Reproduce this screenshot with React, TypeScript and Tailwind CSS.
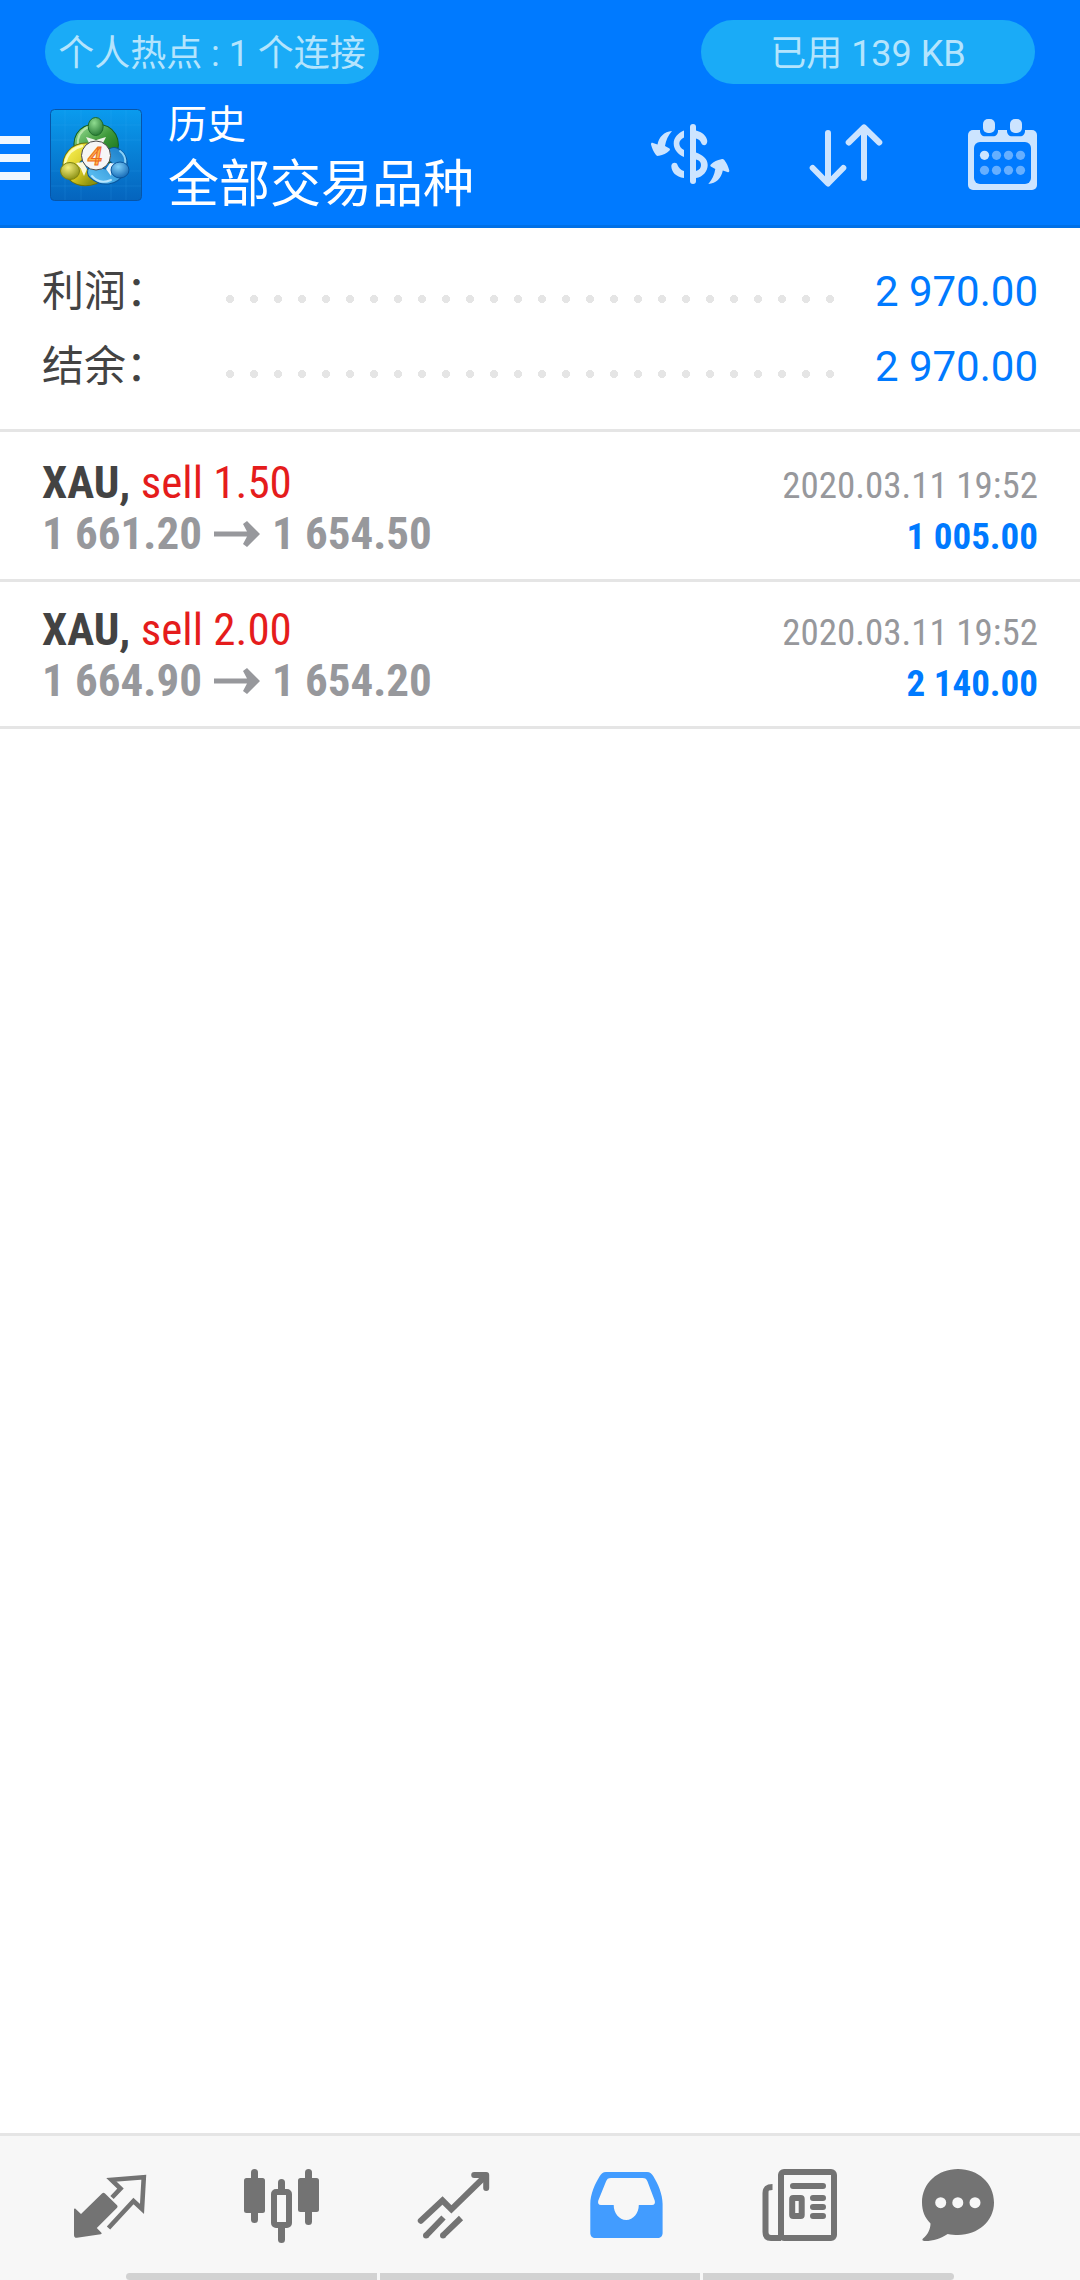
// Trade history screen: account totals, closed deals and the bottom tab bar

import type { ReactNode } from "react";

interface Deal {
  id: number;
  symbol: string;
  side: string;
  open: string;
  close: string;
  time: string;
  profit: string;
}

const totals = [
  { label: "利润：", value: "2 970.00" },
  { label: "结余：", value: "2 970.00" },
];

const deals: Deal[] = [
  {
    id: 1,
    symbol: "XAU,",
    side: "sell 1.50",
    open: "1 661.20",
    close: "1 654.50",
    time: "2020.03.11 19:52",
    profit: "1 005.00",
  },
  {
    id: 2,
    symbol: "XAU,",
    side: "sell 2.00",
    open: "1 664.90",
    close: "1 654.20",
    time: "2020.03.11 19:52",
    profit: "2 140.00",
  },
];

function AppLogo() {
  return (
    <svg viewBox="0 0 92 92" className="size-[92px] shrink-0" aria-hidden="true">
      <defs>
        <linearGradient id="tile" x1="0" y1="0" x2="0" y2="1">
          <stop offset="0" stopColor="#0a9bee" />
          <stop offset="1" stopColor="#0564bd" />
        </linearGradient>
        <linearGradient id="green" x1="0" y1="0" x2="1" y2="1">
          <stop offset="0" stopColor="#7cc878" />
          <stop offset="0.5" stopColor="#3f9a3b" />
          <stop offset="1" stopColor="#1f7a22" />
        </linearGradient>
        <linearGradient id="yellow" x1="0" y1="0" x2="1" y2="1">
          <stop offset="0" stopColor="#f2e94a" />
          <stop offset="0.6" stopColor="#d3c520" />
          <stop offset="1" stopColor="#8f9410" />
        </linearGradient>
        <linearGradient id="blue" x1="1" y1="0" x2="0" y2="1">
          <stop offset="0" stopColor="#2488d0" />
          <stop offset="1" stopColor="#55b8ee" />
        </linearGradient>
        <radialGradient id="greenHead" cx="0.4" cy="0.3" r="0.8">
          <stop offset="0" stopColor="#8fdc90" />
          <stop offset="1" stopColor="#1c6f2a" />
        </radialGradient>
        <radialGradient id="yellowHead" cx="0.4" cy="0.3" r="0.8">
          <stop offset="0" stopColor="#f4ef7c" />
          <stop offset="1" stopColor="#7f8508" />
        </radialGradient>
        <radialGradient id="blueHead" cx="0.4" cy="0.3" r="0.8">
          <stop offset="0" stopColor="#7fd0fa" />
          <stop offset="1" stopColor="#0b5fae" />
        </radialGradient>
      </defs>
      <rect x="0.5" y="0.5" width="91" height="91" rx="4" fill="url(#tile)" stroke="#0655a8" />
      <path d="M15 1V91M31 1V91M61 1V91M76 1V91M1 16H91M1 31H91M1 62H91M1 77H91" stroke="#4db8ff" strokeOpacity="0.14" />

      <g fill="none" strokeLinecap="round">
        <path d="M34 43C29 32 34 23 46 23S64 32 58 46" stroke="#145c1c" strokeWidth="17" />
        <path d="M34 43C29 32 34 23 46 23S64 32 58 46" stroke="url(#green)" strokeWidth="15" />
        <path d="M28 36C27 27 32 21 38 18" stroke="#b5e4a8" strokeWidth="2" />
        <path d="M36 42C26 42 20 50 21 58C24 68 33 71 44 67" stroke="#6d7208" strokeWidth="17" />
        <path d="M36 42C26 42 20 50 21 58C24 68 33 71 44 67" stroke="url(#yellow)" strokeWidth="15" />
        <path d="M32 37C23 39 17 45 15 54" stroke="#fdfbb0" strokeWidth="2.5" />
        <path d="M64 46C70 49 71 55 68 60C63 69 53 70 45 63" stroke="#0a559c" strokeWidth="16" />
        <path d="M64 46C70 49 71 55 68 60C63 69 53 70 45 63" stroke="url(#blue)" strokeWidth="14" />
        <path d="M42 67C47 73 54 74 61 71" stroke="#b8e6fd" strokeWidth="2" />
        <path d="M70 42C74 45 76 50 75 55" stroke="#8ad2f8" strokeWidth="2" />
      </g>
      <path d="M36 28L46 31L56 28L52 36H40Z" fill="#eef5ea" />
      <path d="M26 54L33 53L37 60L34 67L31 60Z" fill="#fbf9dc" />
      <path d="M56 60L60 54L67 55L62 60L61 67Z" fill="#e6f5ff" />

      <ellipse cx="45.7" cy="17.5" rx="7.5" ry="9" fill="url(#greenHead)" stroke="#1d6a2a" />
      <ellipse cx="20" cy="62" rx="9.5" ry="8.5" fill="url(#yellowHead)" stroke="#7c8110" />
      <ellipse cx="70" cy="61" rx="9" ry="8" fill="url(#blueHead)" stroke="#0a559c" />
      <circle cx="46" cy="46.5" r="14.5" fill="#f6f6f6" stroke="#4a4a4a" />
      <text
        x="45"
        y="55.5"
        textAnchor="middle"
        fontSize="26"
        className="font-[Roboto] font-medium italic"
        fill="#ffb84d"
        stroke="#ee6a1c"
        strokeWidth="1"
      >
        4
      </text>
    </svg>
  );
}

function CurrencyIcon() {
  return (
    <svg viewBox="0 0 84 84" className="size-[84px] fill-[#cce4ff]" aria-hidden="true">
      <rect x="42" y="11" width="6" height="60" rx="3" />
      <path d="M36 17.5C30 20 25.7 24.5 25.7 30.5S30 41.5 36 44V37C33 35.5 31.3 33 31.3 30.5S33 26 36 24.5Z" />
      <path d="M23.3 53C23.3 49 29 48.5 29.5 52C30.5 55 33 57.3 36 58V65C28 64 23.5 59 23.3 53Z" />
      <path d="M48 17.5C54 19 58.5 22.5 59.3 28C59.3 32.5 55 33.5 53.5 30.5C52.5 28 51 26 48 25.5Z" />
      <path d="M48 39.5C55 42 59.7 46 59.7 52S55 64 48 65V58C51.5 57 53 55 53 52S51.5 47.5 48 46.5Z" />
      <path
        id="swing"
        d="M24 18C16 18.5 11 24 9.5 31.5L5 30C3.5 29.5 3 30 3 31.5C4 35 5.5 39 8 42C9 43 9.5 43 11 42.8C15 42 18.5 40.5 21.5 37.5C22.3 36.5 22 36 21.5 35.5L17 33C18 27 20 22.5 24 18Z"
      />
      <use href="#swing" transform="rotate(180 42.15 44.5)" />
    </svg>
  );
}

function SortIcon() {
  return (
    <svg
      viewBox="0 0 84 84"
      className="size-[84px] fill-none stroke-[#cce4ff] stroke-[6]"
      strokeLinecap="round"
      strokeLinejoin="round"
      aria-hidden="true"
    >
      <path d="M24 20V70M8.7 55L24 70.5L39.3 55" />
      <path d="M60 65V15M44.7 29.5L60 14.5L75.3 29.5" />
    </svg>
  );
}

function CalendarIcon() {
  return (
    <svg viewBox="0 0 84 84" className="size-[84px]" aria-hidden="true">
      <rect x="8" y="17" width="69" height="60" rx="5" fill="#cce4ff" />
      <rect x="14" y="29" width="57" height="42" rx="6" fill="#007aff" />
      <path d="M20 16H38V18C38 21 36 23.3 33 23.3H25C22 23.3 20 21 20 18Z" fill="#007aff" />
      <path d="M47 16H65V18C65 21 63 23.3 60 23.3H52C49 23.3 47 21 47 18Z" fill="#007aff" />
      <rect x="23" y="6" width="12" height="14" rx="5" fill="#cce4ff" />
      <rect x="50" y="6" width="12" height="14" rx="5" fill="#cce4ff" />
      {[24.5, 36.5, 48.5, 60.5].map((x) => (
        <g key={x}>
          <circle cx={x} cy="42.3" r="4.6" fill={x < 30 ? "#cce4ff" : "#66afff"} />
          <circle cx={x} cy="57.3" r="4.6" fill="#66afff" />
        </g>
      ))}
    </svg>
  );
}

function QuotesIcon() {
  return (
    <>
      <path
        d="M12 52.5C12 51.5 13 51.3 13.7 52L19 57L40 36.5C41 35.5 42 35.5 43 36.5L54.8 48C55.8 49 55.8 50 54.8 51L34.8 71L39.2 75.5C40 76.5 39.7 77 38.7 77.2L15 80.8C13 81 12 80 12 78Z"
        fill="currentColor"
      />
      <path
        d="M50 40.5L58.5 31.5L49.5 22.8L81.8 20.2L80 52L71.5 44L46.5 71"
        fill="none"
        stroke="currentColor"
        strokeWidth="4.6"
      />
    </>
  );
}

function ChartIcon() {
  return (
    <g fill="currentColor">
      <rect x="17" y="12" width="7" height="54" rx="3.5" />
      <rect x="10" y="21" width="21" height="35" rx="2.5" />
      <rect x="44" y="22" width="7" height="14" rx="3.5" />
      <rect x="44" y="66" width="7" height="20" rx="3.5" />
      <rect x="40" y="35" width="15" height="33" rx="2" fill="none" stroke="currentColor" strokeWidth="6" />
      <rect x="71" y="12" width="7" height="56" rx="3.5" />
      <rect x="64" y="21" width="21" height="34" rx="2.5" />
    </g>
  );
}

function TradeIcon() {
  return (
    <g fill="none" stroke="currentColor" strokeWidth="6">
      <path d="M14.8 63.7L36.5 43.5L45.4 52.3L79 19.5" strokeLinecap="round" />
      <path d="M68.2 18H80.2V31" strokeLinecap="round" strokeLinejoin="round" />
      <path d="M20 78.7L37.5 60.5M36.8 78.7L55 61" />
      <g fill="currentColor" stroke="none">
        <circle cx="20" cy="78.5" r="3" />
        <circle cx="37" cy="78.5" r="3" />
      </g>
    </g>
  );
}

function HistoryIcon() {
  return (
    <path
      fill="currentColor"
      fillRule="evenodd"
      d="M28 15H69C72 15 74 17 75.5 19.5C80 27 84.6 37 84.6 47V76C84.6 79 82.6 81 79.6 81H17.3C14.3 81 12.3 79 12.3 76V47C12.3 37 17 27 21.5 19.5C23 17 25 15 28 15ZM33 21C30 21 29 22 28 24.5L20.3 43.5C19.5 46 20.5 48 23 48H35.7C35.7 56 41 63 48.2 63S60.8 56 60.8 48H74C76.5 48 77.5 46 76.7 43.5L69.5 24.5C68.5 22 67.5 21 64.5 21Z"
    />
  );
}

function NewsIcon() {
  return (
    <g fill="none" stroke="currentColor" strokeWidth="6">
      <rect x="31" y="15" width="53" height="66" rx="3" />
      <path d="M22.5 30C17.5 30 15.5 31 15.5 36V75C15.5 79 17.5 81 21 81H31" />
      <path d="M43 29H73M63 41H73M63 50H73M63 59H73" strokeLinecap="round" />
      <rect x="42.2" y="41" width="9.5" height="18" rx="1" />
    </g>
  );
}

function MessagesIcon() {
  return (
    <g>
      <path
        fill="currentColor"
        d="M36 12C56 12 72 26 72 45.5C72 64 56 78 36 78C32.5 78 29 77.8 25.7 77C19 81.5 11 84 3.5 84C0 84 0 82.5 1 81.5C6 77.5 8.5 72 8.5 66.5C3 61 0 54 0 45.5C0 26 16 12 36 12Z"
      />
      <g fill="#f7f7f7">
        <circle cx="18.7" cy="45.7" r="5.5" />
        <circle cx="35.8" cy="45.7" r="5.5" />
        <circle cx="53" cy="45.7" r="5.5" />
      </g>
    </g>
  );
}

const tabs: { name: string; icon: ReactNode; active?: boolean }[] = [
  { name: "行情", icon: <QuotesIcon /> },
  { name: "图表", icon: <ChartIcon /> },
  { name: "交易", icon: <TradeIcon /> },
  { name: "历史", icon: <HistoryIcon />, active: true },
  { name: "新闻", icon: <NewsIcon /> },
  { name: "消息", icon: <MessagesIcon /> },
];

function StatusPill({ children }: { children: ReactNode }) {
  return (
    <div className="flex h-16 w-[334px] items-center justify-center rounded-full bg-[#1aabf7] pt-[3px] text-[36px] whitespace-nowrap text-[#b4e4fd]">
      {children}
    </div>
  );
}

function DealRow({ deal }: { deal: Deal }) {
  return (
    <li className="border-b-3 border-[#e5e5e5] px-[42px] pt-[22px] pb-5 font-['Roboto_Condensed',Roboto,sans-serif] text-[45px] leading-[51px] whitespace-nowrap">
      <div className="flex h-[51px] items-baseline justify-between">
        <p>
          <span className="font-bold text-[#434343]">{deal.symbol}</span>{" "}
          <span className="text-[#e51c1c]">{deal.side}</span>
        </p>
        <p className="text-[37px] text-[#97989c]">{deal.time}</p>
      </div>
      <div className="flex h-[51px] items-baseline justify-between font-bold">
        <p className="flex items-center gap-3 text-[#97989c]">
          {deal.open}
          <svg viewBox="0 0 46 26" className="h-[26px] w-[46px]" aria-label="→">
            <path d="M0 10.5H33L29 3L33 0L46 13L33 26L29 23L33 15.5H0Z" fill="currentColor" />
          </svg>
          {deal.close}
        </p>
        <p className="text-[37px] text-[#007aff]">{deal.profit}</p>
      </div>
    </li>
  );
}

export default function App() {
  return (
    <div className="flex min-h-screen flex-col bg-white font-[Roboto,'Noto_Sans_CJK_SC',sans-serif]">
      <header className="border-b-3 border-[#0070e6] bg-[#007aff] pt-5">
        <div className="flex justify-between px-[45px]">
          <StatusPill>个人热点 : 1 个连接</StatusPill>
          <StatusPill>已用 139 KB</StatusPill>
        </div>

        <div className="flex h-[141px] items-center">
          <button aria-label="菜单" className="mr-5 flex w-[30px] flex-col gap-[10px] pt-[6px]">
            <span className="h-2 w-full bg-[#f0f7ff]" />
            <span className="h-2 w-full bg-[#f0f7ff]" />
            <span className="h-2 w-full bg-[#f0f7ff]" />
          </button>
          <AppLogo />
          <div className="ml-[26px] flex-1 pt-[6px] whitespace-nowrap text-white">
            <p className="text-[39px] leading-[54px]">历史</p>
            <h1 className="text-[51px] leading-[66px]">全部交易品种</h1>
          </div>
          <button aria-label="货币" className="flex w-[156px] justify-center">
            <CurrencyIcon />
          </button>
          <button aria-label="排序" className="flex w-[156px] justify-center">
            <SortIcon />
          </button>
          <button aria-label="日期" className="flex w-[156px] justify-center">
            <CalendarIcon />
          </button>
        </div>
      </header>

      <main className="flex-1">
        {/* Totals */}
        <dl className="border-b-3 border-[#e5e5e5] px-[42px] pt-[26px] pb-[25px] text-[42px] leading-[75px]">
          {totals.map((row) => (
            <div key={row.label} className="flex items-center">
              <dt className="w-44 whitespace-nowrap text-[#434343]">{row.label}</dt>
              {/* Dotted leader */}
              <dd
                aria-hidden="true"
                className="mt-3.5 mr-[30px] h-2 flex-1 bg-[radial-gradient(circle,#e5e5e5_4px,transparent_4px)] bg-[length:24px_8px] bg-repeat-x"
              />
              <dd className="text-[#007aff]">{row.value}</dd>
            </div>
          ))}
        </dl>

        {/* Closed deals */}
        <ul className="pt-[3px]">
          {deals.map((deal) => (
            <DealRow key={deal.id} deal={deal} />
          ))}
        </ul>
      </main>

      <nav className="border-t-3 border-[#e5e5e5] bg-[#f7f7f7] pt-[21px]">
        <div className="mb-5 flex px-6">
          {tabs.map((tab) => (
            <button key={tab.name} aria-label={tab.name} className="flex flex-1 justify-center">
              <svg
                viewBox="0 0 96 96"
                className={`size-24 ${tab.active ? "text-[#429cff]" : "text-[#737373]"}`}
                aria-hidden="true"
              >
                {tab.icon}
              </svg>
            </button>
          ))}
        </div>

        {/* Gesture hints */}
        <div className="mx-[126px] flex h-[7px] gap-[3px]">
          <span className="w-[251px] rounded-l-full bg-[#d2d2d2]" />
          <span className="flex-1 bg-[#d2d2d2]" />
          <span className="w-[251px] rounded-r-full bg-[#d2d2d2]" />
        </div>
      </nav>
    </div>
  );
}
